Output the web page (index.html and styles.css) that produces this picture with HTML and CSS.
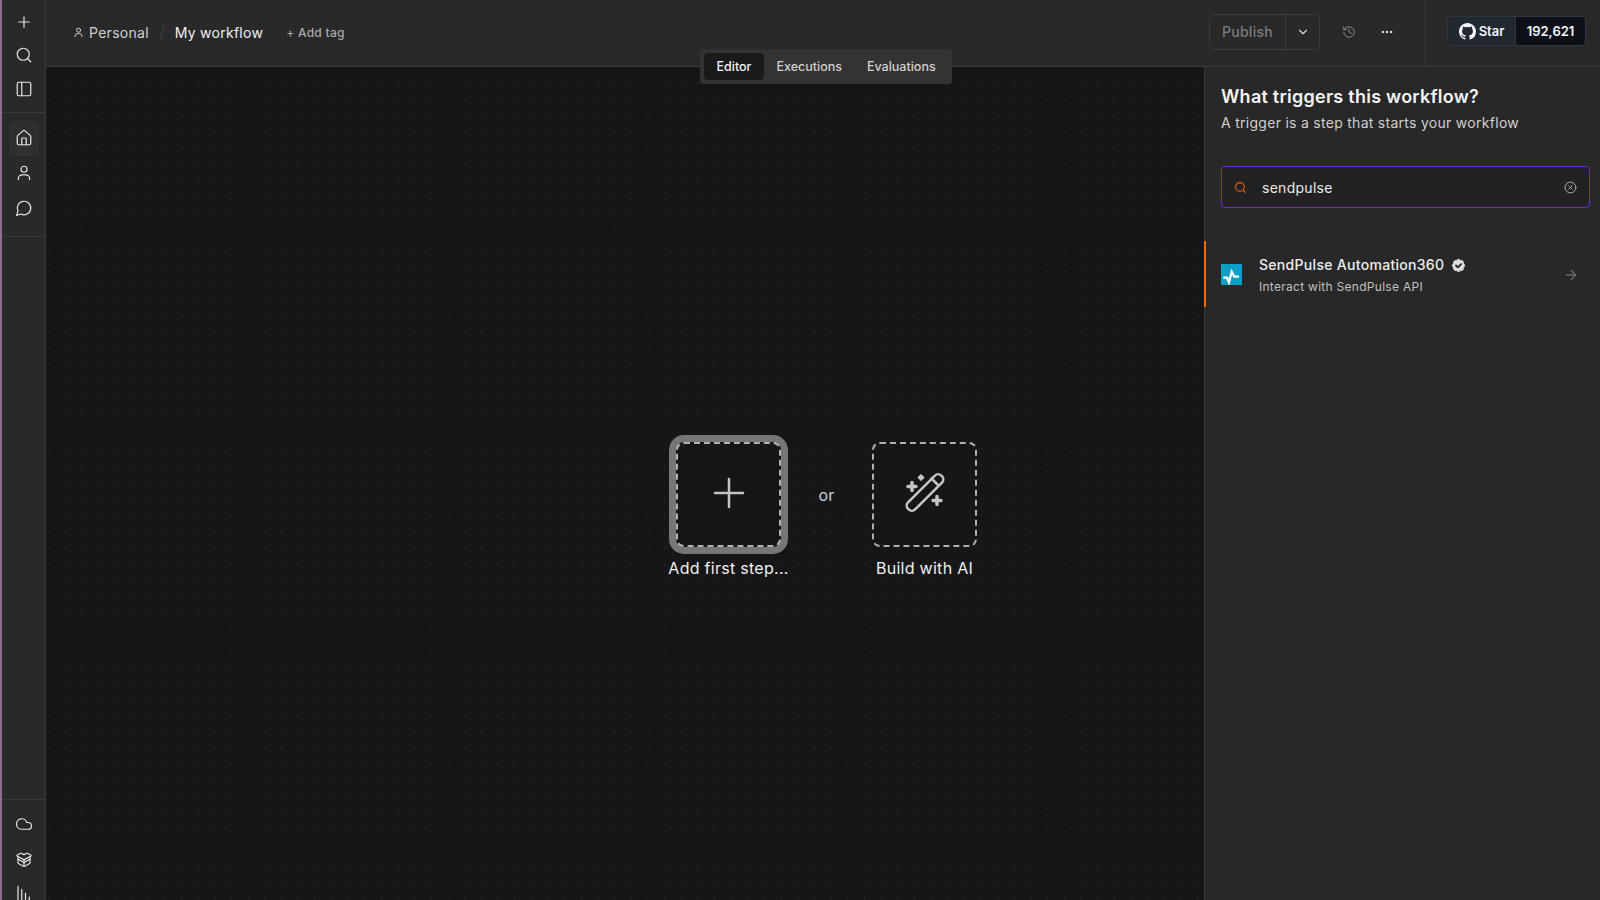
FILE: index.html
```html
<!DOCTYPE html>
<html lang="en">
<head>
  <meta charset="UTF-8">
  <meta name="viewport" content="width=device-width, initial-scale=1.0">
  <title>My workflow</title>
  <link rel="stylesheet" href="styles.css">
</head>
<body>
  <div class="app">
    <div class="strip"></div>

    <nav class="sidebar">
      <div class="side-group side-top">
        <a class="side-item"><svg viewBox="0 0 24 24"><path d="M5 12h14M12 5v14"/></svg></a>
        <a class="side-item"><svg viewBox="0 0 24 24"><circle cx="11" cy="11" r="8"/><path d="m21 21-4.3-4.3"/></svg></a>
        <a class="side-item"><svg viewBox="0 0 24 24"><rect x="3" y="3" width="18" height="18" rx="2"/><path d="M9 3v18"/></svg></a>
      </div>
      <div class="side-group side-mid">
        <a class="side-item active"><svg viewBox="0 0 24 24"><path d="M15 21v-8a1 1 0 0 0-1-1h-4a1 1 0 0 0-1 1v8"/><path d="M3 10a2 2 0 0 1 .7-1.500l7-6a2 2 0 0 1 2.600 0l7 6A2 2 0 0 1 21 10v9a2 2 0 0 1-2 2H5a2 2 0 0 1-2-2z"/></svg></a>
        <a class="side-item"><svg viewBox="0 0 24 24"><circle cx="12" cy="7" r="4"/><path d="M4.500 21v-1.500a5 5 0 0 1 5-5h5a5 5 0 0 1 5 5V21"/></svg></a>
        <a class="side-item"><svg viewBox="0 0 24 24"><path d="M7.900 20A9 9 0 1 0 4 16.100L2 22Z"/></svg></a>
      </div>
      <div class="side-spacer"></div>
      <div class="side-group side-bottom">
        <a class="side-item"><svg viewBox="0 0 24 24"><path d="M17.500 19H9a7 7 0 1 1 6.700-9h1.800a4.500 4.500 0 1 1 0 9Z"/></svg></a>
        <a class="side-item"><svg viewBox="0 0 24 24"><path d="M12 22v-9"/><path d="M15.200 4.600a2 2 0 0 1 1.800 0l3.900 2a1 1 0 0 1 0 1.800L13 12.500a2 2 0 0 1-2 0L3.100 8.400a1 1 0 0 1 0-1.800l3.900-2a2 2 0 0 1 1.800 0L12 6.200Z"/><path d="M20 9v7.500a2 2 0 0 1-1.100 1.800l-6 3.400a2 2 0 0 1-1.800 0l-6-3.400A2 2 0 0 1 4 16.500V9"/><path d="M4.500 12.500 11 16l1 1 1-1 6.500-3.500"/></svg></a>
        <a class="side-item"><svg viewBox="0 0 24 24"><path d="M4 3v18M9 7v14M14 12v9M19 17v4"/></svg></a>
      </div>
    </nav>

    <div class="main">
      <header class="topbar">
        <div class="crumbs">
          <svg class="crumb-icon" viewBox="0 0 24 24"><circle cx="12" cy="7" r="4.500"/><path d="M4.500 21v-1.500a5 5 0 0 1 5-5h5a5 5 0 0 1 5 5V21"/></svg>
          <span class="crumb-project">Personal</span>
          <span class="crumb-sep">/</span>
          <span class="crumb-name">My workflow</span>
          <span class="add-tag">+ Add tag</span>
        </div>
        <div class="actions">
          <div class="publish">
            <span class="publish-label">Publish</span>
            <span class="publish-arrow"><svg viewBox="0 0 24 24"><path d="m6 9 6 6 6-6"/></svg></span>
          </div>
          <span class="action-icon history"><svg viewBox="0 0 24 24"><path d="M3 12a9 9 0 1 0 9-9 9.750 9.750 0 0 0-6.740 2.740L3 8"/><path d="M3 3v5h5"/><path d="M12 7v5l4 2"/></svg></span>
          <span class="action-icon dots"><svg viewBox="0 0 24 24"><circle cx="12" cy="12" r="1"/><circle cx="19" cy="12" r="1"/><circle cx="5" cy="12" r="1"/></svg></span>
        </div>
        <div class="github">
          <div class="star-btn">
            <span class="star-label">
              <svg viewBox="0 0 16 16"><path d="M8 0C3.580 0 0 3.580 0 8c0 3.540 2.290 6.530 5.470 7.590.4.070.55-.17.55-.38 0-.19-.01-.82-.01-1.490-2.010.37-2.530-.49-2.690-.94-.09-.23-.48-.94-.82-1.130-.28-.15-.68-.52-.01-.53.63-.01 1.080.58 1.230.82.72 1.210 1.870.87 2.330.66.070-.52.28-.87.51-1.070-1.780-.2-3.640-.89-3.640-3.950 0-.87.31-1.590.82-2.150-.08-.2-.36-1.020.08-2.120 0 0 .67-.21 2.200.82.64-.18 1.320-.27 2-.27.68 0 1.360.09 2 .27 1.530-1.040 2.200-.82 2.200-.82.44 1.100.16 1.920.08 2.120.51.56.82 1.270.82 2.150 0 3.070-1.870 3.750-3.650 3.950.29.25.54.73.54 1.480 0 1.070-.01 1.930-.01 2.200 0 .21.15.46.55.38A8.013 8.013 0 0016 8c0-4.420-3.580-8-8-8z"/></svg>
              Star
            </span>
            <span class="star-count">192,621</span>
          </div>
        </div>
      </header>

      <div class="tabs">
        <span class="tab active">Editor</span>
        <span class="tab">Executions</span>
        <span class="tab">Evaluations</span>
      </div>

      <div class="content">
        <section class="canvas">
          <div class="start">
            <div class="node">
              <div class="node-box focused"><svg class="plus-icon" viewBox="0 0 48 48"><path d="M10 22h28M24 8v28"/></svg></div>
              <span class="node-label">Add first step...</span>
            </div>
            <span class="or">or</span>
            <div class="node">
              <div class="node-box">
                <svg class="wand-icon" viewBox="0 0 48 48">
                  <rect x="0.500" y="16.500" width="47" height="10" rx="4.500" transform="rotate(-45 24 21.500)"/>
                  <path d="M30.500 7.500l6 6"/>
                  <path class="sparkle" d="M11 11.500v8M7 15.500h8"/>
                  <path class="sparkle" d="M36 25.500v8M32 29.500h8"/>
                  <path class="sparkle" d="M20 5v3M18.500 6.500h3"/>
                </svg>
              </div>
              <span class="node-label">Build with AI</span>
            </div>
          </div>
        </section>

        <aside class="panel">
          <div class="panel-head">
            <h2>What triggers this workflow?</h2>
            <p>A trigger is a step that starts your workflow</p>
          </div>
          <div class="search">
            <svg class="search-icon" viewBox="0 0 24 24"><circle cx="11" cy="11" r="8"/><path d="m21 21-4.300-4.300"/></svg>
            <span class="search-text">sendpulse</span>
            <svg class="search-clear" viewBox="0 0 24 24"><circle cx="12" cy="12" r="10"/><path d="m15 9-6 6M9 9l6 6"/></svg>
          </div>
          <div class="result">
            <svg class="result-logo" viewBox="0 0 21 21"><rect class="logo-bg" width="21" height="21"/><path class="logo-pulse" d="M2.300 13.700H6l2 4.600 2.700-10.600 2.600 5H18"/></svg>
            <div class="result-text">
              <div class="result-title">SendPulse Automation360
                <svg class="verified" viewBox="0 0 24 24"><path class="verified-badge" d="M3.850 8.620a4 4 0 0 1 4.780-4.770 4 4 0 0 1 6.740 0 4 4 0 0 1 4.780 4.780 4 4 0 0 1 0 6.740 4 4 0 0 1-4.770 4.780 4 4 0 0 1-6.750 0 4 4 0 0 1-4.780-4.770 4 4 0 0 1 0-6.760Z"/><path class="verified-check" d="m8 12 3 3 5-5"/></svg>
              </div>
              <div class="result-desc">Interact with SendPulse API</div>
            </div>
            <svg class="result-arrow" viewBox="0 0 24 24"><path d="M5 12h14"/><path d="m12 5 7 7-7 7"/></svg>
          </div>
        </aside>
      </div>
    </div>
  </div>
</body>
</html>
```

FILE: styles.css
```css
* {
  box-sizing: border-box;
}
html, body {
  margin: 0;
  padding: 0;
  height: 100%;
  overflow: hidden;
}
body {
  background-color: #161616;
  color: #f0f0f0;
  font-family: Inter, "Liberation Sans", sans-serif;
  font-size: 14px;
  letter-spacing: 0.02em;
}
svg {
  display: block;
  fill: none;
  stroke: currentColor;
  stroke-width: 2;
  stroke-linecap: round;
  stroke-linejoin: round;
}
.app {
  display: flex;
  height: 900px;
}
.strip {
  width: 2px;
  background-color: #8d6c8e;
}

/* sidebar */
.sidebar {
  width: 44px;
  height: 900px;
  overflow: hidden;
  display: flex;
  flex-direction: column;
  background-color: #292929;
  border-right: 1px solid #3a3a3a;
  flex-shrink: 0;
}
.side-group {
  display: flex;
  flex-direction: column;
  align-items: center;
}
.side-top {
  padding: 5px 0 6px;
  border-bottom: 1px solid #3a3a3a;
}
.side-mid {
  padding: 8px 0 9.500px;
  border-bottom: 1px solid #3a3a3a;
}
.side-spacer {
  flex: 1;
}
.side-bottom {
  flex-shrink: 0;
  height: 101px;
  padding-top: 7px;
  border-top: 1px solid #3a3a3a;
}
.side-item {
  width: 30px;
  height: 33.500px;
  display: flex;
  align-items: center;
  justify-content: center;
  color: #e4e4e4;
  border-radius: 6px;
  flex-shrink: 0;
}
.side-mid .side-item {
  height: 35.200px;
}
.side-bottom .side-item {
  height: 34.500px;
}
.side-item svg {
  width: 18px;
  height: 18px;
  stroke-width: 1.600;
}
.side-item.active {
  background-color: #2f2f2f;
}

/* top bar */
.main {
  position: relative;
  flex: 1;
  display: flex;
  flex-direction: column;
  min-width: 0;
}
.topbar {
  height: 67px;
  flex-shrink: 0;
  display: flex;
  align-items: center;
  background-color: #292929;
  border-bottom: 1px solid #3a3a3a;
  padding-left: 27px;
}
.crumbs {
  flex: 1;
  display: flex;
  align-items: center;
  padding-bottom: 1px;
}
.crumb-icon {
  width: 11px;
  height: 11px;
  color: #d6d6d6;
  margin-right: 5px;
}
.crumb-project {
  color: #d0d0d0;
  font-size: 14px;
}
.crumb-sep {
  color: #3a3a3a;
  font-size: 18px;
  margin: 0 9px 0 10px;
}
.crumb-name {
  color: #f0f0f0;
  font-size: 14px;
}
.add-tag {
  color: #aaaaaa;
  font-size: 12px;
  font-weight: 500;
  margin-left: 23px;
}
.actions {
  display: flex;
  align-items: center;
  height: 66px;
  padding-bottom: 3px;
}
.publish {
  display: flex;
  height: 36px;
  width: 111px;
  border: 1px solid #3d3d3d;
  border-radius: 6px;
  color: #7c7c7c;
}
.publish-label {
  flex: 1;
  display: flex;
  align-items: center;
  justify-content: center;
  font-size: 14px;
  font-weight: 500;
  border-right: 1px solid #3d3d3d;
}
.publish-arrow {
  width: 33px;
  display: flex;
  align-items: center;
  justify-content: center;
  color: #d8d8d8;
}
.publish-arrow svg {
  width: 14px;
  height: 14px;
}
.action-icon {
  display: flex;
  align-items: center;
  justify-content: center;
}
.history {
  margin-left: 22px;
  color: #8a8a8a;
}
.history svg {
  width: 14px;
  height: 14px;
  stroke-width: 1.700;
}
.dots {
  margin-left: 24px;
  margin-right: 31px;
  color: #d8d8d8;
}
.dots svg {
  width: 14px;
  height: 14px;
  stroke-width: 2.500;
}
.github {
  width: 175px;
  height: 66px;
  display: flex;
  align-items: center;
  padding-left: 21px;
  padding-bottom: 4px;
  border-left: 1px solid #3a3a3a;
}
.star-btn {
  display: flex;
  height: 30px;
  width: 139px;
  border: 1px solid #2f3742;
  border-radius: 5px;
  overflow: hidden;
  font-size: 13px;
  letter-spacing: 0;
  font-weight: 600;
  color: #f0f6fc;
}
.star-label {
  width: 68px;
  display: flex;
  align-items: center;
  justify-content: center;
  gap: 3px;
  background-color: #212830;
  border-right: 1px solid #2f3742;
}
.star-label svg {
  width: 17px;
  height: 17px;
  fill: currentColor;
  stroke: none;
}
.star-count {
  flex: 1;
  display: flex;
  align-items: center;
  justify-content: center;
  background-color: #0d1117;
}

/* Editor / Executions / Evaluations switch lies over the top bar edge */
.tabs {
  position: absolute;
  top: 49px;
  left: 654px;
  z-index: 10;
  display: flex;
  height: 35px;
  padding: 4px;
  background-color: #333333;
  border-radius: 4px;
  font-size: 12.500px;
  letter-spacing: 0;
  font-weight: 500;
}
.tab {
  display: flex;
  align-items: center;
  padding: 0 12.500px;
  color: #d0d0d0;
  border-radius: 4px;
}
.tab.active {
  background-color: #1a1a1a;
  color: #f5f5f5;
}

.content {
  flex: 1;
  display: flex;
  min-height: 0;
}
.canvas {
  position: relative;
  flex: 1;
  background-color: #161616;
  background-image: radial-gradient(circle, #3c3c3c 0.6px, transparent 0.8px);
  background-size: 16.670px 16.670px;
  background-position: -6px 6.700px;
}
.start {
  position: absolute;
  left: 630px;
  top: 375px;
  display: flex;
}
.node {
  width: 105px;
  display: flex;
  flex-direction: column;
  align-items: center;
}
.node-box {
  width: 105px;
  height: 105px;
  display: flex;
  align-items: center;
  justify-content: center;
  background-color: #161616;
  border: 2px dashed #b0b0b0;
  border-radius: 8px;
  color: #c4c4c4;
}
.node-box.focused {
  box-shadow: 0 0 0 7px #767676;
}
.plus-icon,
.wand-icon {
  width: 48px;
  height: 48px;
  stroke-width: 2.500;
}
.sparkle {
  stroke-width: 3.500;
}
.node-label {
  margin-top: 12px;
  font-size: 16px;
  line-height: 19px;
  white-space: nowrap;
  color: #f0f0f0;
}
.or {
  width: 91px;
  height: 105px;
  display: flex;
  align-items: center;
  justify-content: center;
  font-size: 16px;
  color: #d0d0d0;
}

/* node picker panel */
.panel {
  width: 396px;
  flex-shrink: 0;
  background-color: #282828;
  border-left: 1px solid #3a3a3a;
  padding-top: 18px;
}
.panel-head {
  padding-left: 16px;
}
.panel h2 {
  margin: 0;
  font-size: 18px;
  line-height: 24px;
  font-weight: 600;
  letter-spacing: 0.014em;
  color: #f5f5f5;
}
.panel p {
  margin: 4px 0 0;
  font-size: 14px;
  line-height: 20px;
  color: #d0d0d0;
}
.search {
  display: flex;
  align-items: center;
  height: 42px;
  margin: 33px 10px 0 16px;
  padding: 0 12px;
  border: 1px solid #6d28d9;
  border-radius: 4px;
  background-color: #222222;
}
.search-icon {
  width: 13px;
  height: 13px;
  color: #e8650f;
}
.search-text {
  flex: 1;
  margin-left: 15px;
  font-size: 14px;
  color: #e8e8e8;
}
.search-clear {
  width: 13px;
  height: 13px;
  color: #b4b4b4;
  stroke-width: 1.800;
}
.result {
  display: flex;
  align-items: center;
  height: 66px;
  margin-top: 33px;
  margin-left: -1px;
  padding: 0 21px 0 15px;
  border-left: 2px solid #f26a10;
}
.result-logo {
  width: 21px;
  height: 21px;
  flex-shrink: 0;
}
.logo-bg {
  fill: #0e9fc6;
  stroke: none;
}
.logo-pulse {
  stroke: #ffffff;
  stroke-width: 2.300;
  stroke-linecap: butt;
  stroke-linejoin: miter;
}
.result-text {
  flex: 1;
  margin-left: 17px;
  margin-top: 2px;
}
.result-title {
  display: flex;
  align-items: center;
  gap: 7px;
  font-size: 14px;
  line-height: 20px;
  letter-spacing: 0.3px;
  color: #eeeeee;
  font-weight: 450;
}
.verified {
  width: 15px;
  height: 15px;
}
.verified-badge {
  fill: #dcdcdc;
  stroke: #dcdcdc;
  stroke-width: 1;
}
.verified-check {
  stroke: #282828;
  stroke-width: 3;
}
.result-desc {
  margin-top: 4px;
  font-size: 12px;
  line-height: 16px;
  color: #c0c0c0;
}
.result-arrow {
  width: 16px;
  height: 16px;
  margin-top: 2px;
  color: #6a6a6a;
}
```
